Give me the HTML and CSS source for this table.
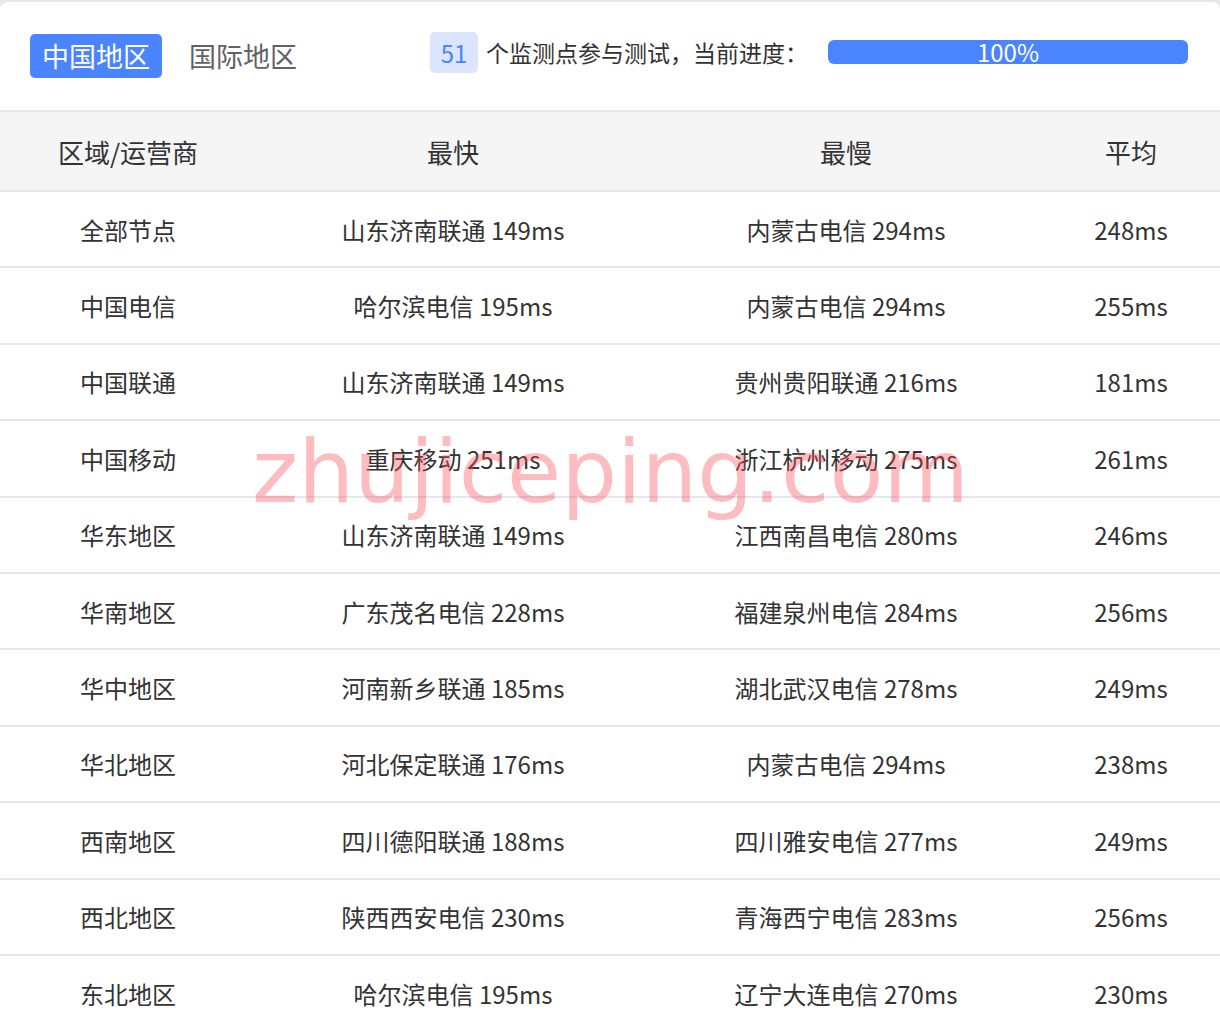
FILE: index.html
```html
<!DOCTYPE html>
<html lang="zh-CN">
<head>
    <meta charset="UTF-8">
    <meta name="viewport" content="width=device-width, initial-scale=1.0">
    <title>测速结果</title>
    <link rel="stylesheet" href="styles.css">
</head>
<body>
    <div class="card">
        <div class="topbar">
            <div class="tabs">
                <span class="tab active">中国地区</span>
                <span class="tab">国际地区</span>
            </div>
            <div class="progress-info">
                <span class="count">51</span>
                <span class="label">个监测点参与测试，当前进度：</span>
                <div class="bar"><div class="bar-fill" style="width: 100%">100%</div></div>
            </div>
        </div>

        <table class="result">
            <colgroup>
                <col class="c1"><col class="c2"><col class="c3"><col class="c4">
            </colgroup>
            <thead>
                <tr><th>区域/运营商</th><th>最快</th><th>最慢</th><th>平均</th></tr>
            </thead>
            <tbody>
                <tr><td>全部节点</td><td>山东济南联通 149ms</td><td>内蒙古电信 294ms</td><td>248ms</td></tr>
                <tr><td>中国电信</td><td>哈尔滨电信 195ms</td><td>内蒙古电信 294ms</td><td>255ms</td></tr>
                <tr><td>中国联通</td><td>山东济南联通 149ms</td><td>贵州贵阳联通 216ms</td><td>181ms</td></tr>
                <tr><td>中国移动</td><td>重庆移动 251ms</td><td>浙江杭州移动 275ms</td><td>261ms</td></tr>
                <tr><td>华东地区</td><td>山东济南联通 149ms</td><td>江西南昌电信 280ms</td><td>246ms</td></tr>
                <tr><td>华南地区</td><td>广东茂名电信 228ms</td><td>福建泉州电信 284ms</td><td>256ms</td></tr>
                <tr><td>华中地区</td><td>河南新乡联通 185ms</td><td>湖北武汉电信 278ms</td><td>249ms</td></tr>
                <tr><td>华北地区</td><td>河北保定联通 176ms</td><td>内蒙古电信 294ms</td><td>238ms</td></tr>
                <tr><td>西南地区</td><td>四川德阳联通 188ms</td><td>四川雅安电信 277ms</td><td>249ms</td></tr>
                <tr><td>西北地区</td><td>陕西西安电信 230ms</td><td>青海西宁电信 283ms</td><td>256ms</td></tr>
                <tr><td>东北地区</td><td>哈尔滨电信 195ms</td><td>辽宁大连电信 270ms</td><td>230ms</td></tr>
            </tbody>
        </table>

        <div class="watermark">zhujiceping.com</div>
    </div>
</body>
</html>
```

FILE: styles.css
```css
body {
    margin: 0;
    padding: 2px 0 0;
    background: #e4e8ec;
    font-family: "Noto Sans CJK SC", "Noto Sans", sans-serif;
    color: #333;
}
.card {
    position: relative;
    background: white;
    border-radius: 8px 8px 0 0;
    overflow: hidden;
}
.topbar {
    height: 108px;
    display: flex;
    align-items: center;
    justify-content: space-between;
    padding: 0 32px 0 30px;
}
.tabs {
    display: flex;
    gap: 15px;
}
.tab {
    height: 44px;
    line-height: 44px;
    padding: 0 12px;
    font-size: 27px;
    color: #606266;
    border-radius: 5px;
}
.tab.active {
    background: #4a84ff;
    color: white;
}
.progress-info {
    display: flex;
    align-items: center;
    margin-bottom: 8px;
}
.count {
    width: 48px;
    height: 41px;
    line-height: 41px;
    text-align: center;
    background: #dbe5ff;
    color: #4a84ff;
    border-radius: 5px;
    font-size: 24px;
}
.label {
    font-size: 23px;
    margin-left: 8px;
    color: #333;
}
.bar {
    width: 360px;
    height: 24px;
    margin-left: 20px;
    background: #e8eefb;
    border-radius: 6px;
}
.bar-fill {
    height: 24px;
    line-height: 24px;
    background: #4a84ff;
    border-radius: 6px;
    color: white;
    text-align: center;
    font-size: 24px;
}
.result {
    width: 100%;
    border-collapse: collapse;
    table-layout: fixed;
}
.c1 { width: 256px; }
.c2 { width: 394px; }
.c3 { width: 392px; }
.c4 { width: 178px; }
.result th,
.result td {
    text-align: center;
    padding: 0;
    font-weight: normal;
}
.result th {
    height: 78px;
    background: #f5f5f6;
    font-size: 26px;
    border-top: 2px solid #e4e8ec;
    border-bottom: 2px solid #e4e8ec;
}
.result td {
    height: 74.4px;
    font-size: 24px;
    border-bottom: 2px solid #e4e8ec;
}
.watermark {
    position: absolute;
    left: 252px;
    top: 418px;
    font-family: "DejaVu Sans", sans-serif;
    font-size: 88px;
    color: rgba(255, 70, 80, 0.36);
    white-space: nowrap;
    pointer-events: none;
}
```
